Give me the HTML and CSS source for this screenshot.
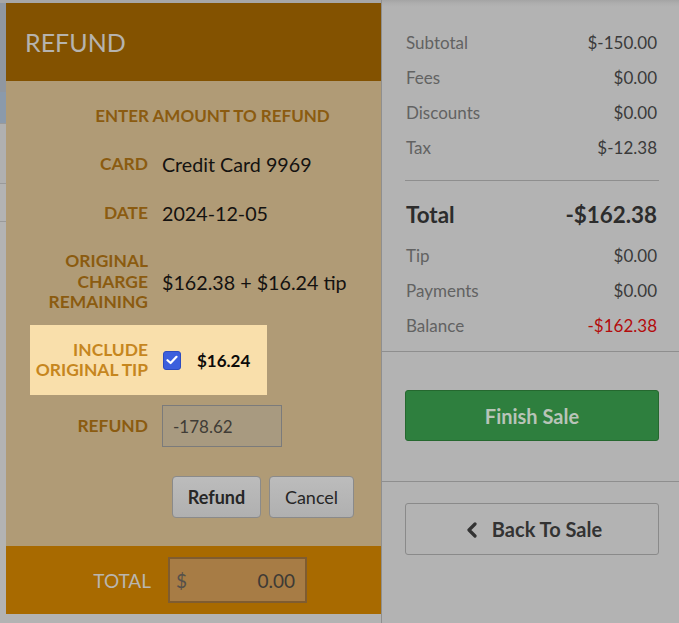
FILE: index.html
```html
<!DOCTYPE html>
<html>
<head>
<meta charset="utf-8">
<link rel="stylesheet" href="styles.css">
</head>
<body>
<div class="screen">
  <div class="behind">
    <div class="modal">
      <div class="modal-head">REFUND</div>
      <div class="modal-body">
        <div class="intro">ENTER AMOUNT TO REFUND</div>
        <div class="row row-card">
          <div class="lbl">CARD</div>
          <div class="val">Credit Card 9969</div>
        </div>
        <div class="row row-date">
          <div class="lbl">DATE</div>
          <div class="val">2024-12-05</div>
        </div>
        <div class="row row-orig">
          <div class="lbl">ORIGINAL<br>CHARGE<br>REMAINING</div>
          <div class="val">$162.38 + $16.24 tip</div>
        </div>
        <div class="tipbox">
          <div class="lbl tiplbl">INCLUDE<br>ORIGINAL TIP</div>
          <span class="check"><svg width="12" height="10" viewBox="0 0 12 10"><path d="M1.5 5.2 L4.6 8 L10.5 1.8" fill="none" stroke="#fff" stroke-width="2.2" stroke-linecap="round" stroke-linejoin="round"/></svg></span>
          <div class="tipval">$16.24</div>
        </div>
        <div class="row row-refund">
          <div class="lbl">REFUND</div>
          <div class="field">-178.62</div>
        </div>
        <div class="actions">
          <button class="btn btn-strong">Refund</button>
          <button class="btn btn-plain">Cancel</button>
        </div>
      </div>
      <div class="modal-foot">
        <div class="foot-lbl">TOTAL</div>
        <div class="money"><span class="cur">$</span><span class="amt">0.00</span></div>
      </div>
    </div>
  </div>
  <div class="side">
    <div class="summary">
      <div class="line"><span class="k">Subtotal</span><span class="v">$-150.00</span></div>
      <div class="line"><span class="k">Fees</span><span class="v">$0.00</span></div>
      <div class="line"><span class="k">Discounts</span><span class="v">$0.00</span></div>
      <div class="line"><span class="k">Tax</span><span class="v">$-12.38</span></div>
      <div class="divider"></div>
      <div class="line total"><span class="k">Total</span><span class="v">-$162.38</span></div>
      <div class="line first-after"><span class="k">Tip</span><span class="v">$0.00</span></div>
      <div class="line"><span class="k">Payments</span><span class="v">$0.00</span></div>
      <div class="line"><span class="k">Balance</span><span class="v neg">-$162.38</span></div>
    </div>
    <div class="finish">
      <button class="finish-btn">Finish Sale</button>
    </div>
    <div class="back">
      <button class="back-btn"><svg class="chev" width="12" height="16" viewBox="0 0 12 16"><path d="M9 2 L3 8 L9 14" fill="none" stroke="#333" stroke-width="3.2" stroke-linecap="round" stroke-linejoin="round"/></svg><span>Back To Sale</span></button>
    </div>
  </div>
</div>
</body>
</html>
```
FILE: styles.css
```css
* { box-sizing: border-box; }
html, body {
  margin: 0;
  padding: 0;
}
body {
  width: 679px;
  height: 623px;
  overflow: hidden;
  background: #b3b3b3;
  font-family: Lato, "Noto Sans", sans-serif;
}
.screen {
  display: flex;
  height: 623px;
  background: linear-gradient(to bottom, #a4a4a4 0, #adadad 3px, #b3b3b3 7px);
}
.behind {
  width: 381px;
  flex: none;
  padding: 3px 0 0 6px;
  background: linear-gradient(to bottom,
    #a7a7a7 0, #a7a7a7 3px,
    #9097a0 3px, #9097a0 92px,
    #8b9aab 92px, #8b9aab 123px,
    #9a9a9a 123px, #9a9a9a 124px,
    #b0b0b0 124px, #b0b0b0 183px,
    #9a9a9a 183px, #9a9a9a 184px,
    #b3b3b3 184px, #b3b3b3 221px,
    #9a9a9a 221px, #9a9a9a 222px,
    #b3b3b3 222px);
}
.modal {
  width: 375px;
  display: flex;
  flex-direction: column;
}
.modal-head {
  height: 78px;
  background: #835200;
  color: #b6b3ae;
  font-size: 25px;
  padding-left: 19px;
  display: flex;
  align-items: center;
}
.modal-body {
  background: #b09b76;
  padding: 25px 27px 28px 0;
  display: flex;
  flex-direction: column;
}
.intro {
  height: 20px;
  line-height: 20px;
  text-align: center;
  margin-right: -27px;
  padding-left: 38px;
  font-weight: 700;
  font-size: 17px;
  color: #8b5b10;
}
.row {
  display: flex;
  align-items: center;
  gap: 14px;
}
.lbl {
  width: 142px;
  flex: none;
  text-align: right;
  font-weight: 700;
  font-size: 17.4px;
  line-height: 20.5px;
  color: #8b5b10;
}
.val {
  font-size: 19.7px;
  color: #141210;
}
.row-card { margin-top: 14px; height: 49px; }
.row-date { height: 49px; }
.row-orig { margin-top: 13px; height: 62px; }
.tipbox {
  margin: 12px 0 0 24px;
  width: 237px;
  height: 70px;
  background: #f9dfab;
  display: flex;
  align-items: center;
}
.tiplbl {
  width: 118px;
  color: #c6861e;
}
.check {
  margin-left: 15px;
  width: 18px;
  height: 19px;
  border-radius: 3px;
  background: #3c5fdd;
  border: 1px solid #2d4bbf;
  display: flex;
  align-items: center;
  justify-content: center;
}
.tipval {
  margin-left: 16px;
  font-weight: 700;
  font-size: 17px;
  color: #0c0a08;
}
.row-refund { margin-top: 10px; height: 42px; }
.field {
  width: 120px;
  height: 42px;
  background: #a89a80;
  border: 1px solid #7b7b7b;
  padding-left: 10px;
  display: flex;
  align-items: center;
  font-size: 17px;
  color: #403c36;
}
.actions {
  margin-top: 29px;
  display: flex;
  justify-content: flex-end;
  gap: 8px;
}
.btn {
  height: 42px;
  padding: 0;
  font-family: Lato, "Noto Sans", sans-serif;
  font-size: 18px;
  color: #262626;
  background: linear-gradient(to bottom, #bcbcbc, #b0b0b0);
  border: 1px solid #8a8a8a;
  border-radius: 4px;
}
.btn-strong { font-weight: 700; width: 89px; }
.btn-plain { width: 85px; }
.modal-foot {
  height: 68px;
  background: #a86a00;
  display: flex;
  align-items: center;
  gap: 17px;
}
.foot-lbl {
  width: 145px;
  text-align: right;
  font-size: 19px;
  color: #b9b6b0;
}
.money {
  width: 139px;
  height: 46px;
  background: #a77c45;
  border: 2px solid #7f5c30;
  display: flex;
  align-items: center;
  justify-content: space-between;
  padding: 0 10px 0 6px;
  font-size: 19px;
}
.cur { color: #55504a; }
.amt { color: #3e3a35; }
.side {
  flex: 1;
  border-left: 1px solid #8f8f8f;
  display: flex;
  flex-direction: column;
}
.summary {
  padding: 25px 20px 8px 23px;
  border-bottom: 1px solid #8e8e8e;
}
.line {
  height: 35px;
  display: flex;
  align-items: center;
  justify-content: space-between;
  padding: 0 2px 0 1px;
  font-size: 17px;
}
.k { color: #626262; }
.v { color: #3a3a3a; }
.neg { color: #b30c0c; }
.divider {
  height: 1px;
  background: #8e8e8e;
  margin: 15px 0 13px;
}
.line.total {
  height: 41px;
  font-size: 22.4px;
  font-weight: 700;
}
.line.total .k, .line.total .v { color: #2c2c2c; }
.first-after { margin-top: 3px; }
.finish {
  padding: 38px 20px 40px 23px;
  border-bottom: 1px solid #8e8e8e;
}
.finish-btn {
  display: block;
  width: 100%;
  height: 51px;
  background: #2e7f3e;
  border: 1px solid #25682f;
  border-radius: 3px;
  color: #b8c4b8;
  font-family: Lato, "Noto Sans", sans-serif;
  font-weight: 700;
  font-size: 20px;
}
.back {
  padding: 21px 20px 0 23px;
}
.back-btn {
  width: 100%;
  height: 52px;
  background: #b3b3b3;
  border: 1px solid #8a8a8a;
  border-radius: 3px;
  color: #333;
  font-family: Lato, "Noto Sans", sans-serif;
  font-weight: 700;
  font-size: 20px;
  display: flex;
  align-items: center;
  justify-content: center;
  gap: 14px;
  padding-left: 10px;
}
.chev { margin-top: 1px; }
```
